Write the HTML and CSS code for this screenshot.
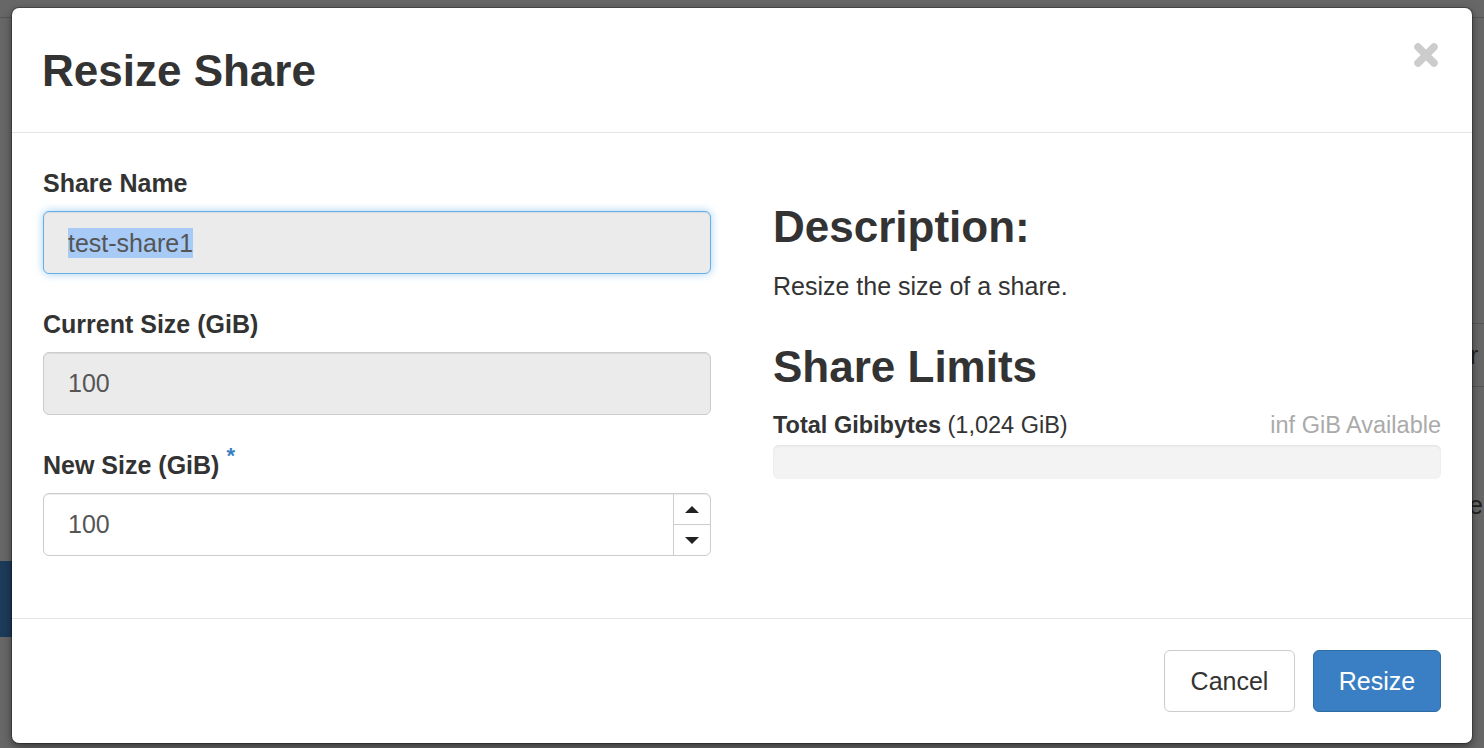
FILE: index.html
```html
<!DOCTYPE html>
<html>
<head>
<meta charset="utf-8">
<link rel="stylesheet" href="styles.css">
</head>
<body>
<div class="page-behind">
  <div class="bg-topline"></div>
  <div class="bg-blue"></div>
  <div class="bg-line bg-line-1"></div>
  <div class="bg-line bg-line-2"></div>
  <div class="bg-char bg-char-1">r</div>
  <div class="bg-char bg-char-2">e</div>
</div>
<div class="overlay">
  <div class="modal">
    <div class="modal-header">
      <h3 class="modal-title">Resize Share</h3>
      <svg class="close" width="26" height="26" viewBox="0 0 26 26">
        <path d="M5 5 L21 21 M21 5 L5 21" stroke="#cccccc" stroke-width="7.5" stroke-linecap="round" fill="none"/>
      </svg>
    </div>
    <div class="modal-body">
      <div class="col-left">
        <div class="form-group">
          <div class="label">Share Name</div>
          <div class="field readonly focused"><span class="sel">test-share1</span></div>
        </div>
        <div class="form-group">
          <div class="label">Current Size (GiB)</div>
          <div class="field readonly">100</div>
        </div>
        <div class="form-group last">
          <div class="label">New Size (GiB)<span class="req">*</span></div>
          <div class="field number">
            <div class="num-value">100</div>
            <div class="spinner">
              <div class="spin-btn"><span class="tri-up"></span></div>
              <div class="spin-btn"><span class="tri-down"></span></div>
            </div>
          </div>
        </div>
      </div>
      <div class="col-right">
        <h3 class="heading first">Description:</h3>
        <p class="desc">Resize the size of a share.</p>
        <h3 class="heading">Share Limits</h3>
        <div class="quota-row">
          <div><strong>Total Gibibytes</strong> (1,024 GiB)</div>
          <div class="avail">inf GiB Available</div>
        </div>
        <div class="progress"></div>
      </div>
    </div>
    <div class="modal-footer">
      <div class="btn btn-default">Cancel</div>
      <div class="btn btn-primary">Resize</div>
    </div>
  </div>
</div>
</body>
</html>
```

FILE: styles.css
```css
* { box-sizing: border-box; }
html, body {
  margin: 0;
  padding: 0;
  width: 1484px;
  height: 748px;
  overflow: hidden;
  background: #676767;
  font-family: "Liberation Sans", Helvetica, Arial, sans-serif;
  color: #333;
}
.page-behind { position: absolute; inset: 0; }
.bg-topline { position: absolute; left: 0; right: 0; top: 17px; height: 1px; background: #555; }
.bg-blue { position: absolute; left: 0; width: 12px; top: 561px; height: 76px; background: #1c3a5a; }
.bg-line { position: absolute; left: 1472px; right: 0; height: 1px; background: #555; }
.bg-line-1 { top: 323px; }
.bg-line-2 { top: 386px; }
.bg-char { position: absolute; left: 1470px; font-size: 25px; color: #222; line-height: 30px; }
.bg-char-1 { top: 340px; }
.bg-char-2 { top: 490px; left: 1469px; }

.overlay {
  position: absolute;
  inset: 0;
  padding: 8px 12px 0 12px;
}
.modal {
  position: relative;
  width: 1460px;
  height: 735px;
  background: #fff;
  border-radius: 7px;
  box-shadow: 0 0 0 1px rgba(0,0,0,.25), 0 3px 9px rgba(0,0,0,.5);
  display: flex;
  flex-direction: column;
}
.modal-header {
  display: flex;
  justify-content: space-between;
  align-items: flex-start;
  padding: 35px 33px 33px 30px;
  border-bottom: 1px solid #e5e5e5;
}
.modal-title {
  margin: 0;
  font-size: 44px;
  line-height: 56px;
  font-weight: bold;
  color: #333;
}
.close { display: block; margin-top: -1px; }

.modal-body {
  display: grid;
  grid-template-columns: 668px 668px;
  column-gap: 62px;
  padding: 35px 31px 62px 31px;
}
.form-group { margin-bottom: 35px; }
.form-group.last { margin-bottom: 0; }
.label {
  font-size: 25px;
  line-height: 30px;
  height: 30px;
  font-weight: bold;
  margin-bottom: 13px;
  color: #333;
}
.req {
  color: #3a7fc3;
  font-size: 22px;
  line-height: 0;
  vertical-align: 11px;
  margin-left: 7px;
}
.field {
  height: 63px;
  border: 1px solid #ccc;
  border-radius: 6px;
  padding: 0 24px;
  font-size: 25px;
  color: #555;
  display: flex;
  align-items: center;
  box-shadow: inset 0 1px 1px rgba(0,0,0,.075);
}
.field.readonly { background: #ebebeb; }
.field.focused {
  border-color: #66afe9;
  box-shadow: inset 0 1px 1px rgba(0,0,0,.075), 0 0 8px rgba(102,175,233,.6);
}
.sel {
  background: #a7cbf6;
  line-height: 30px;
  display: inline-block;
}
.field.number { padding-right: 0; }
.num-value { flex: 1; }
.spinner {
  width: 37px;
  height: 100%;
  border-left: 1px solid #ccc;
  display: flex;
  flex-direction: column;
}
.spin-btn {
  flex: 1;
  display: flex;
  align-items: center;
  justify-content: center;
}
.spin-btn + .spin-btn { border-top: 1px solid #ccc; }
.tri-up {
  width: 0; height: 0;
  border-left: 7px solid transparent;
  border-right: 7px solid transparent;
  border-bottom: 7px solid #222;
}
.tri-down {
  width: 0; height: 0;
  border-left: 7px solid transparent;
  border-right: 7px solid transparent;
  border-top: 7px solid #222;
}

.col-right { display: flex; flex-direction: column; }
.heading {
  margin: 40px 0 18px 0;
  font-size: 44px;
  line-height: 52px;
  font-weight: bold;
  color: #333;
}
.heading.first { margin-top: 33px; }
.desc {
  margin: 0;
  font-size: 25px;
  line-height: 30px;
}
.quota-row {
  display: flex;
  justify-content: space-between;
  font-size: 23.5px;
  line-height: 28px;
}
.quota-row strong { font-weight: bold; }
.avail { color: #aaa; }
.progress {
  margin-top: 6px;
  height: 34px;
  background: #f3f3f3;
  border-radius: 6px;
  box-shadow: inset 0 1px 2px rgba(0,0,0,.08);
}

.modal-footer {
  border-top: 1px solid #e5e5e5;
  padding: 31px 31px 30px 31px;
  display: flex;
  justify-content: flex-end;
  gap: 18px;
}
.btn {
  height: 62px;
  padding: 0 25px;
  border-radius: 6px;
  font-size: 25px;
  display: flex;
  align-items: center;
  border: 1px solid #ccc;
}
.btn-default { background: #fff; color: #333; width: 131px; justify-content: center; }
.btn-primary { background: #3a7fc3; border-color: #2e6da4; color: #fff; width: 128px; justify-content: center; }
```
